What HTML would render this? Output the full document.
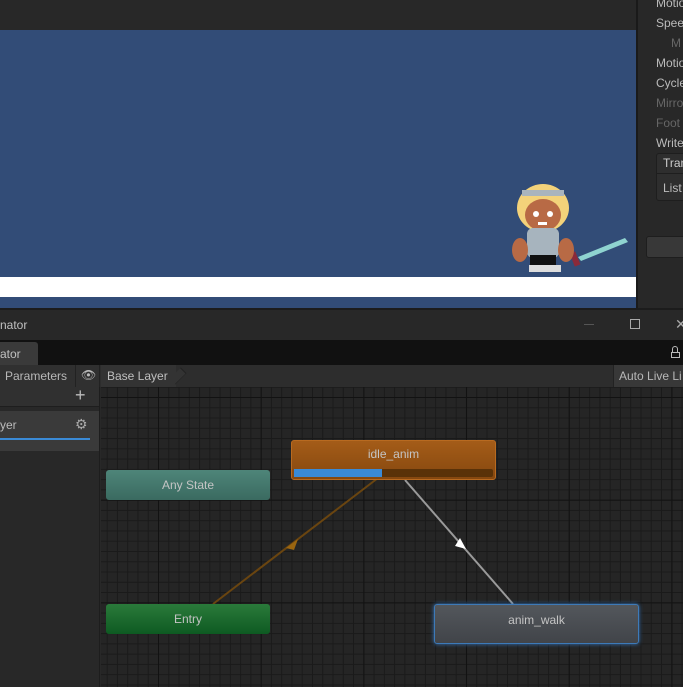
<!DOCTYPE html>
<html><head><meta charset="utf-8"><style>
*{margin:0;padding:0;box-sizing:border-box}
body{width:683px;height:687px;overflow:hidden;background:#282828;font-family:"Liberation Sans",sans-serif;position:relative;color:#c4c4c4}
.a{position:absolute}
.t{font-size:12px;white-space:nowrap}
.node{position:absolute;border-radius:3px;color:#c4c4c4;font-size:12px;text-align:center}
</style></head><body>
<div class="a" style="left:0;top:0;width:636px;height:30px;background:#282828"></div>
<div class="a" style="left:0;top:30px;width:636px;height:278px;background:#324c77"></div>
<div class="a" style="left:0;top:277px;width:636px;height:20px;background:#fff"></div>
<div class="a" style="left:636px;top:0;width:2px;height:308px;background:#1a1a1a"></div>
<svg class="a" style="left:500px;top:180px" width="135" height="95" viewBox="0 0 135 95">
 <polygon points="78,77 125,58 128,62 81,81" fill="#8fd3d0"/>
 <rect x="72" y="72" width="6" height="14" fill="#8a2a3a" transform="rotate(-22 75 79)"/>
 <ellipse cx="43" cy="28" rx="26" ry="24" fill="#f3d27a"/>
 <rect x="22" y="10" width="42" height="6" fill="#a9b4bd"/>
 <ellipse cx="43" cy="35" rx="18" ry="16" fill="#b86a45"/>
 <rect x="27" y="48" width="32" height="30" rx="6" fill="#a7b4be"/>
 <ellipse cx="20" cy="70" rx="8" ry="12" fill="#b86a45"/>
 <ellipse cx="66" cy="70" rx="8" ry="12" fill="#b86a45"/>
 <rect x="30" y="75" width="26" height="10" fill="#111"/>
 <rect x="29" y="85" width="32" height="7" fill="#ddd"/>
 <circle cx="36" cy="34" r="3" fill="#fff"/><circle cx="50" cy="34" r="3" fill="#fff"/>
 <rect x="38" y="42" width="9" height="3" fill="#fff"/>
</svg>
<div class="a t" style="left:656px;top:-4px;color:#bbb">Motio</div>
<div class="a t" style="left:656px;top:16px;color:#bbb">Speed</div>
<div class="a t" style="left:671px;top:36px;color:#666">M</div>
<div class="a t" style="left:656px;top:56px;color:#bbb">Motio</div>
<div class="a t" style="left:656px;top:76px;color:#bbb">Cycle</div>
<div class="a t" style="left:656px;top:96px;color:#666">Mirro</div>
<div class="a t" style="left:656px;top:116px;color:#666">Foot</div>
<div class="a t" style="left:656px;top:136px;color:#bbb">Write</div>
<div class="a" style="left:656px;top:153px;width:40px;height:48px;border:1px solid #1e1e1e;border-radius:3px;background:#2e2e2e"></div>
<div class="a" style="left:657px;top:173px;width:30px;height:1px;background:#1e1e1e"></div>
<div class="a t" style="left:663px;top:156px;color:#ccc">Tran</div>
<div class="a t" style="left:663px;top:181px;color:#bbb">List</div>
<div class="a" style="left:646px;top:236px;width:40px;height:22px;border:1px solid #1e1e1e;border-radius:3px;background:#383838"></div>
<div class="a" style="left:0;top:308px;width:683px;height:2px;background:#1c1c1c"></div>
<div class="a" style="left:0;top:310px;width:683px;height:30px;background:#282828"></div>
<div class="a t" style="left:0;top:318px;color:#c0c0c0">nator</div>
<div class="a" style="left:584px;top:324px;width:10px;height:1px;background:#555"></div>
<div class="a" style="left:630px;top:319px;width:10px;height:10px;border:1px solid #aaa"></div>
<div class="a t" style="left:675px;top:316px;color:#aaa;font-size:14px">✕</div>
<div class="a" style="left:0;top:340px;width:683px;height:25px;background:#111"></div>
<div class="a" style="left:0;top:342px;width:38px;height:23px;background:#3a3a3a;border-radius:0 3px 0 0"></div>
<div class="a t" style="left:0;top:347px;color:#c0c0c0">ator</div>
<div class="a" style="left:671px;top:352px;width:9px;height:6px;border:1px solid #bbb"></div>
<div class="a" style="left:672px;top:346px;width:6px;height:6px;border:1px solid #bbb;border-bottom:none;border-radius:3px 3px 0 0"></div>
<div class="a" style="left:0;top:365px;width:683px;height:22px;background:#2d2d2d"></div>
<div class="a" style="left:0;top:365px;width:100px;height:22px;background:#303030;border-right:1px solid #222"></div>
<div class="a" style="left:75px;top:365px;width:1px;height:22px;background:#222"></div>
<div class="a t" style="left:5px;top:369px;color:#b8b8b8">Parameters</div>
<div class="a t" style="left:81px;top:368px;color:#bbb;font-size:12px">👁</div>
<div class="a" style="left:101px;top:365px;width:75px;height:22px;background:#333"></div>
<div class="a" style="left:170px;top:368px;width:16px;height:16px;background:#333;transform:rotate(45deg) scaleX(.5);border-right:1px solid #222;border-top:1px solid #222"></div>
<div class="a t" style="left:107px;top:369px;color:#bfbfbf">Base Layer</div>
<div class="a" style="left:613px;top:365px;width:70px;height:22px;background:#383838;border-left:1px solid #222"></div>
<div class="a t" style="left:619px;top:369px;color:#b8b8b8">Auto Live Li</div>
<div class="a" style="left:0;top:387px;width:100px;height:300px;background:#282828;border-right:1px solid #1d1d1d"></div>
<div class="a" style="left:0;top:387px;width:99px;height:20px;background:#303030;border-bottom:1px solid #1e1e1e"></div>
<div class="a t" style="left:75px;top:385px;color:#bbb;font-size:18px">+</div>
<div class="a" style="left:0;top:411px;width:99px;height:40px;background:#3a3a3a"></div>
<div class="a t" style="left:0;top:418px;color:#bbb">yer</div>
<div class="a t" style="left:75px;top:416px;color:#aaa;font-size:14px">⚙</div>
<div class="a" style="left:0;top:438px;width:90px;height:2px;background:#3a8ad6"></div>
<div class="a" style="left:101px;top:387px;width:582px;height:300px;background-color:#252525;
background-image:linear-gradient(90deg,#121212 1px,transparent 1px),linear-gradient(#121212 1px,transparent 1px),linear-gradient(90deg,#1a1a1a 1px,transparent 1px),linear-gradient(#1a1a1a 1px,transparent 1px);
background-size:102.7px 102.7px,102.7px 102.7px,10.27px 10.27px,10.27px 10.27px;background-position:57px 10px,57px 10px,57px 10px,57px 10px"></div>
<svg class="a" style="left:0;top:0" width="683" height="687">
 <line x1="213" y1="604" x2="378" y2="478" stroke="#6a4510" stroke-width="2"/>
 <polygon points="298,539 286,548 294,550" fill="#9a6510"/>
 <line x1="405" y1="480" x2="513" y2="604" stroke="#9a9a9a" stroke-width="2"/>
 <polygon points="455,546 466,549 460,538" fill="#fff"/>
</svg>
<div class="node" style="left:106px;top:470px;width:164px;height:30px;background:linear-gradient(#4e8579,#3a6a60);line-height:30px">Any State</div>
<div class="node" style="left:106px;top:604px;width:164px;height:30px;background:linear-gradient(#2a7a3a,#0e5a22);line-height:30px">Entry</div>
<div class="node" style="left:291px;top:440px;width:205px;height:40px;background:linear-gradient(#a45c18,#86480f);border:1px solid #b86a20">
 <div style="line-height:26px">idle_anim</div>
 <div style="position:absolute;left:2px;top:28px;width:199px;height:8px;background:#5a3208;border-radius:2px"><div style="width:88px;height:8px;background:#3a8ad6"></div></div>
</div>
<div class="node" style="left:434px;top:604px;width:205px;height:40px;background:linear-gradient(#53575c,#414449);border:1px solid #3d7ab8;box-shadow:0 0 4px #3a7ac0;line-height:30px">anim_walk</div>
</body></html>
